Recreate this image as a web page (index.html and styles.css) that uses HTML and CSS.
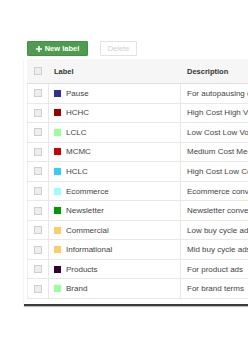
FILE: index.html
```html
<!DOCTYPE html>
<html>
<head>
<meta charset="utf-8">
<link rel="stylesheet" href="styles.css">
</head>
<body>
<div class="page">
  <div class="toolbar">
    <button class="btn btn-primary"><svg class="plus" viewBox="0 0 8 8" width="6" height="6"><path d="M3 0h2v3h3v2H5v3H3V5H0V3h3z" fill="#fff"/></svg>New label</button>
    <button class="btn btn-disabled">Delete</button>
  </div>
  <div class="panel">
    <div class="table">
      <div class="row head">
        <div class="c-check"><span class="cb"></span></div>
        <div class="c-label">Label</div>
        <div class="c-desc">Description</div>
      </div>
      <div class="row"><div class="c-check"><span class="cb"></span></div><div class="c-label"><span class="sw sw-pause"></span>Pause</div><div class="c-desc">For autopausing old ads</div></div>
      <div class="row"><div class="c-check"><span class="cb"></span></div><div class="c-label"><span class="sw sw-hchc"></span>HCHC</div><div class="c-desc">High Cost High Volume</div></div>
      <div class="row"><div class="c-check"><span class="cb"></span></div><div class="c-label"><span class="sw sw-lclc"></span>LCLC</div><div class="c-desc">Low Cost Low Volume</div></div>
      <div class="row"><div class="c-check"><span class="cb"></span></div><div class="c-label"><span class="sw sw-mcmc"></span>MCMC</div><div class="c-desc">Medium Cost Medium Volume</div></div>
      <div class="row"><div class="c-check"><span class="cb"></span></div><div class="c-label"><span class="sw sw-hclc"></span>HCLC</div><div class="c-desc">High Cost Low Conversion</div></div>
      <div class="row"><div class="c-check"><span class="cb"></span></div><div class="c-label"><span class="sw sw-ecom"></span>Ecommerce</div><div class="c-desc">Ecommerce conversions</div></div>
      <div class="row"><div class="c-check"><span class="cb"></span></div><div class="c-label"><span class="sw sw-news"></span>Newsletter</div><div class="c-desc">Newsletter conversions</div></div>
      <div class="row"><div class="c-check"><span class="cb"></span></div><div class="c-label"><span class="sw sw-comm"></span>Commercial</div><div class="c-desc">Low buy cycle ads</div></div>
      <div class="row"><div class="c-check"><span class="cb"></span></div><div class="c-label"><span class="sw sw-info"></span>Informational</div><div class="c-desc">Mid buy cycle ads</div></div>
      <div class="row"><div class="c-check"><span class="cb"></span></div><div class="c-label"><span class="sw sw-prod"></span>Products</div><div class="c-desc">For product ads</div></div>
      <div class="row"><div class="c-check"><span class="cb"></span></div><div class="c-label"><span class="sw sw-brand"></span>Brand</div><div class="c-desc">For brand terms</div></div>
    </div>
  </div>
</div>
</body>
</html>
```
FILE: styles.css
```css
html, body {
  margin: 0;
  padding: 0;
  background: #fff;
  overflow: hidden;
}
body {
  font-family: "Liberation Sans", Arial, sans-serif;
  font-size: 8px;
  color: #333;
}
.page {
  width: 248px;
  height: 340px;
  padding-top: 41px;
  box-sizing: border-box;
}
.toolbar {
  display: flex;
  gap: 12px;
  padding-left: 27px;
  height: 15px;
}
.btn {
  font-family: "Liberation Sans", Arial, sans-serif;
  font-size: 7.5px;
  height: 15px;
  padding: 0;
  margin: 0;
  border-radius: 1px;
  display: flex;
  align-items: center;
  justify-content: center;
  box-sizing: border-box;
}
.btn-primary {
  width: 61px;
  background: #4f9c50;
  border: 1px solid #468f47;
  color: #fff;
  font-weight: bold;
  gap: 3px;
}
.btn-disabled {
  width: 37px;
  background: #fff;
  border: 1px solid #e2e2e2;
  color: #cfcfcf;
}
.panel {
  margin-top: 3px;
  margin-left: 24px;
  width: 224px;
  padding-left: 3px;
  padding-bottom: 5px;
  border-bottom: 2px solid #3a3a3a;
  box-shadow: 0 1px 1px rgba(0,0,0,0.25);
  box-sizing: border-box;
}
.table {
  width: 240px;
}
.row {
  display: grid;
  grid-template-columns: 22px 131px 1fr;
  height: 19.55px;
  border-bottom: 1px solid #e8e8e8;
  box-sizing: border-box;
  white-space: nowrap;
  color: #444;
}
.row.head {
  height: 25px;
  background: #f6f6f6;
  border-bottom: 1px solid #dedede;
  font-weight: bold;
  color: #333;
  font-size: 7.5px;
}
.row > div {
  display: flex;
  align-items: center;
  overflow: hidden;
}
.row .c-check {
  justify-content: center;
  border-left: 1px solid #eee;
  border-right: 1px solid #e8e8e8;
}
.row .c-label {
  padding-left: 5px;
}
.row .c-desc {
  padding-left: 6px;
  border-left: 1px solid #e8e8e8;
}
.row.head .c-check,
.row.head .c-desc {
  border-color: transparent;
}
.row.head .c-label { padding-left: 5px; }
.cb {
  width: 6px;
  height: 6px;
  border: 1px solid #cfcfcf;
  background: #eeeeee;
  display: block;
}
.sw {
  width: 7px;
  height: 7px;
  margin-right: 5px;
  display: block;
  flex: none;
}
.sw-pause { background: #2e3192; }
.sw-hchc { background: #990000; }
.sw-lclc { background: #99ff99; }
.sw-mcmc { background: #cc0000; }
.sw-hclc { background: #33ccff; }
.sw-ecom { background: #99ffff; }
.sw-news { background: #009900; }
.sw-comm { background: #ffcc66; }
.sw-info { background: #ffcc66; }
.sw-prod { background: #330033; }
.sw-brand { background: #99ff99; }
```
